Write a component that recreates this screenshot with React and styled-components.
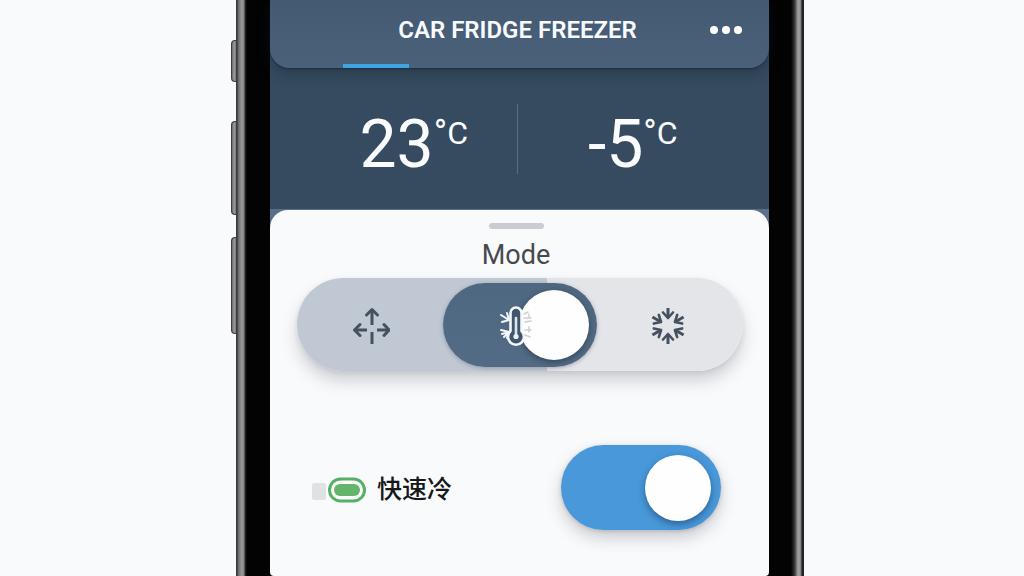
import React, { useState } from "react";
import styled, { createGlobalStyle } from "styled-components";

const Global = createGlobalStyle`
  *, *::before, *::after { box-sizing: border-box; }
  body { margin: 0; background: #f9fafb; font-family: Roboto, "Liberation Sans", sans-serif; }
`;

const Page = styled.main`
  min-height: 100vh;
  display: flex;
  justify-content: center;
  align-items: stretch;
  padding-left: 11px;
`;

const Phone = styled.div`
  width: 100%;
  max-width: 573px;
  display: flex;
`;

const ButtonRail = styled.div`
  width: 5px;
  flex: none;
  display: flex;
  flex-direction: column;
  padding-top: 40px;
`;

const SideKey = styled.span`
  height: ${(p) => p.$height}px;
  margin-bottom: ${(p) => p.$gap || 0}px;
  border: 1px solid #3c3c3e;
  border-right: 0;
  border-radius: 4px 0 0 4px;
  background: linear-gradient(90deg, #6a6a6c, #9a9a9c 60%, #747476);
`;

const Bezel = styled.div`
  flex: 1;
  min-width: 0;
  display: flex;
  padding: 0 35px 0 34px;
  background:
    linear-gradient(90deg, #3b3a3c 0 1px, #5b5a5c 2px, #777678 3px, #99989b 6px, #828184 8px, #2a2a2b 9px, transparent 11px) left / 12px 100% no-repeat,
    linear-gradient(270deg, #222 0 2px, #777678 3px, #a6a5a8 5px, #8a898c 7px, #5e5d60 8px, #2e2c2c 10px, transparent 13px) right / 14px 100% no-repeat,
    #030304;
`;

const Screen = styled.div`
  flex: 1;
  min-width: 0;
  display: flex;
  flex-direction: column;
  background: linear-gradient(#364b60 0 209px, #5b6f88 209px 260px, #050506 260px);
`;

const Header = styled.header`
  height: 68px;
  display: flex;
  flex-direction: column;
  justify-content: space-between;
  background: linear-gradient(#445a72, #4a617a);
  border-radius: 0 0 20px 20px;
  box-shadow: 0 1px 2px rgba(20, 32, 46, 0.6), 0 6px 14px rgba(20, 32, 46, 0.35);
`;

const TitleRow = styled.div`
  height: 60px;
  display: grid;
  grid-template-columns: 1fr auto 1fr;
  align-items: center;
  padding: 0 27px 0 23px;
`;

const Title = styled.h1`
  grid-column: 2;
  margin: 0;
  color: #f8fafd;
  font-size: 24px;
  font-weight: 600;
  line-height: 28px;
  white-space: nowrap;
`;

const MoreButton = styled.button`
  justify-self: end;
  display: flex;
  gap: 4px;
  padding: 8px 0;
  border: 0;
  background: none;
`;

const Dot = styled.span`
  width: 8px;
  height: 8px;
  border-radius: 50%;
  background: #fff;
`;

const TabMarker = styled.div`
  width: 66px;
  height: 4px;
  margin-left: 73px;
  background: #42a3e2;
`;

const Readouts = styled.section`
  height: 142px;
  display: grid;
  grid-template-columns: 247px 1px 1fr;
  align-items: center;
`;

const Readout = styled.p`
  margin: 0;
  display: flex;
  align-items: flex-start;
  justify-content: ${(p) => (p.$side === "start" ? "flex-end" : "flex-start")};
  padding: ${(p) => (p.$side === "start" ? "12px 49px 0 0" : "12px 0 0 70px")};
  color: #fbfcfe;
  font-size: 66px;
  line-height: 72px;
`;

const Unit = styled.span`
  display: flex;
  font-size: 32px;
  line-height: 48px;
`;

const Degree = styled.span`
  font-size: 36px;
`;

const Divider = styled.span`
  height: 70px;
  background: #5b6d7e;
`;

const Sheet = styled.section`
  flex: 1;
  padding: 13px 26px 40px 27px;
  border-radius: 18px 18px 4px 4px;
  background: #f9fafb;
`;

const SheetHead = styled.div`
  display: flex;
  flex-direction: column;
  align-items: center;
  padding-right: 8px;
`;

const Handle = styled.span`
  width: 55px;
  height: 6px;
  border-radius: 3px;
  background: #cbccd1;
`;

const SheetTitle = styled.h2`
  margin: 9px 0 6px;
  color: #474950;
  font-size: 27px;
  font-weight: 400;
  line-height: 34px;
`;

const Segments = styled.div`
  height: 93px;
  display: grid;
  grid-template-columns: repeat(3, 1fr);
  padding: 5px 0 4px;
  border-radius: 47px;
  background: linear-gradient(90deg, #bfc8d3 0 56%, #e3e5e9 56%);
  box-shadow: 0 10px 16px rgba(60, 66, 84, 0.22), 0 2px 5px rgba(60, 66, 84, 0.1);
`;

const Segment = styled.label`
  position: relative;
  display: flex;
  align-items: center;
  justify-content: center;
  margin: ${(p) => (p.$on ? "0 -3px" : "0")};
  border-radius: 42px;
  background: ${(p) => (p.$on ? "linear-gradient(#4f6881, #536b84)" : "none")};
  box-shadow: ${(p) => (p.$on ? "0 1px 4px rgba(60, 70, 90, 0.35)" : "none")};
  color: #46515f;
`;

const HiddenRadio = styled.input`
  position: absolute;
  inset: 0;
  margin: 0;
  opacity: 0;
`;

const Knob = styled.span`
  position: absolute;
  top: 7px;
  right: 8px;
  width: 70px;
  height: 70px;
  border-radius: 50%;
  background: #fefefe;
  box-shadow: 0 2px 6px rgba(20, 32, 48, 0.5);
`;

const Glyph = styled.svg`
  position: relative;
  display: block;
  fill: none;
  stroke: currentColor;
  stroke-linecap: round;
  stroke-linejoin: round;
  pointer-events: none;
`;

const OptionRow = styled.div`
  display: flex;
  align-items: center;
  justify-content: space-between;
  margin-top: 74px;
  padding: 0 22px 0 15px;
`;

const OptionLabel = styled.label`
  display: flex;
  align-items: center;
  gap: 11px;
  padding-top: 5px;
  color: #16181a;
  font-family: Roboto, "Noto Sans CJK SC", sans-serif;
  font-size: 25px;
  font-weight: 500;
  line-height: 36px;
`;

const Switch = styled.input`
  appearance: none;
  width: 160px;
  height: 85px;
  margin: 0;
  padding: 10px;
  display: flex;
  justify-content: ${(p) => (p.checked ? "flex-end" : "flex-start")};
  border-radius: 43px;
  background: ${(p) => (p.checked ? "#4898da" : "#c4c9d0")};
  box-shadow: 0 8px 16px rgba(60, 60, 76, 0.24), 0 1px 4px rgba(60, 60, 76, 0.2);

  &::before {
    content: "";
    width: 66px;
    height: 66px;
    border-radius: 50%;
    background: #fefefe;
    box-shadow: 0 3px 7px rgba(16, 44, 80, 0.5);
  }
`;

function SpreadIcon() {
  return (
    <Glyph width="38" height="38" viewBox="0 0 38 38" strokeWidth="3" aria-hidden="true">
      <path strokeLinecap="butt" d="M20 19V4M20 26v12M15 24H3M25 24h12" />
      <path d="M14.500 9 20 3.500 25.500 9M8 18.500 2.500 24 8 29.500M32 18.500 37 24 32 29.500" />
    </Glyph>
  );
}

function ThermoIcon() {
  return (
    <Glyph width="44" height="44" viewBox="0 0 44 44" aria-hidden="true">
      <g stroke="#f4f7fa" strokeWidth="2">
        <path d="M3 12l8 5M9 10l2 7-7 2M3 27l8 2-7 2M9 35l2-6-5 5" />
        <path d="M12.500 10a5.500 5.500 0 0 1 11 0v18a8 8 0 1 1-11 0z" strokeWidth="2.600" fill="#40566e" />
      </g>
      <path d="M18 15v17" stroke="#dfe5ea" strokeWidth="2.600" />
      <circle cx="18" cy="33.500" r="2.600" fill="#eef2f6" stroke="none" />
      <g stroke="#cdd1d2" strokeWidth="1.500">
        <path d="M26 11l4-2M26 15h7M31 11v3M27 19l6-1M27 27h6M31 24v5M27 32l5 2" />
      </g>
    </Glyph>
  );
}

function ConvergeIcon() {
  return (
    <Glyph width="38" height="38" viewBox="-18 -20 38 38" strokeWidth="3" aria-hidden="true">
      {[0, 60, 120, 180, 240, 300].map((a) => (
        <g key={a} transform={`rotate(${a})`}>
          <path strokeLinecap="butt" d="M0-18V-8" />
          <path strokeWidth="2.600" d="M-5-13.500 0-8 5-13.500" />
        </g>
      ))}
    </Glyph>
  );
}

function QuickCoolIcon() {
  return (
    <Glyph width="54" height="26" viewBox="0 0 54 26" aria-hidden="true">
      <rect x="0" y="6" width="14" height="17" rx="2" fill="#e0e1e3" stroke="none" />
      <rect x="17.500" y="2" width="35" height="22" rx="11" stroke="#56b066" strokeWidth="3" fill="#fafcfb" />
      <rect x="22" y="7" width="26" height="12" rx="6" fill="#62b56b" stroke="none" />
    </Glyph>
  );
}

const MODES = [
  { id: "spread", name: "Airflow", Icon: SpreadIcon },
  { id: "thermo", name: "Temperature", Icon: ThermoIcon },
  { id: "converge", name: "Freeze", Icon: ConvergeIcon },
];

export default function App() {
  const [mode, setMode] = useState("thermo");
  const [quick, setQuick] = useState(true);
  return (
    <>
      <Global />
      <Page>
        <Phone>
          <ButtonRail>
            <SideKey $height={42} $gap={39} />
            <SideKey $height={94} $gap={22} />
            <SideKey $height={97} />
          </ButtonRail>
          <Bezel>
            <Screen>
              <Header>
                <TitleRow>
                  <Title>CAR FRIDGE FREEZER</Title>
                  <MoreButton type="button" aria-label="More">
                    <Dot />
                    <Dot />
                    <Dot />
                  </MoreButton>
                </TitleRow>
                <TabMarker />
              </Header>
              <Readouts>
                <Readout $side="start">23<Unit><Degree>°</Degree>C</Unit></Readout>
                <Divider />
                <Readout $side="end">-5<Unit><Degree>°</Degree>C</Unit></Readout>
              </Readouts>
              <Sheet>
                <SheetHead>
                  <Handle />
                  <SheetTitle>Mode</SheetTitle>
                </SheetHead>
                <Segments role="radiogroup" aria-label="Mode">
                  {MODES.map(({ id, name, Icon }) => (
                    <Segment key={id} $on={mode === id}>
                      <HiddenRadio
                        type="radio"
                        name="mode"
                        aria-label={name}
                        checked={mode === id}
                        onChange={() => setMode(id)}
                      />
                      {mode === id && <Knob />}
                      <Icon />
                    </Segment>
                  ))}
                </Segments>
                <OptionRow>
                  <OptionLabel htmlFor="quick">
                    <QuickCoolIcon />
                    快速冷
                  </OptionLabel>
                  <Switch
                    id="quick"
                    type="checkbox"
                    role="switch"
                    checked={quick}
                    onChange={(e) => setQuick(e.target.checked)}
                  />
                </OptionRow>
              </Sheet>
            </Screen>
          </Bezel>
        </Phone>
      </Page>
    </>
  );
}
